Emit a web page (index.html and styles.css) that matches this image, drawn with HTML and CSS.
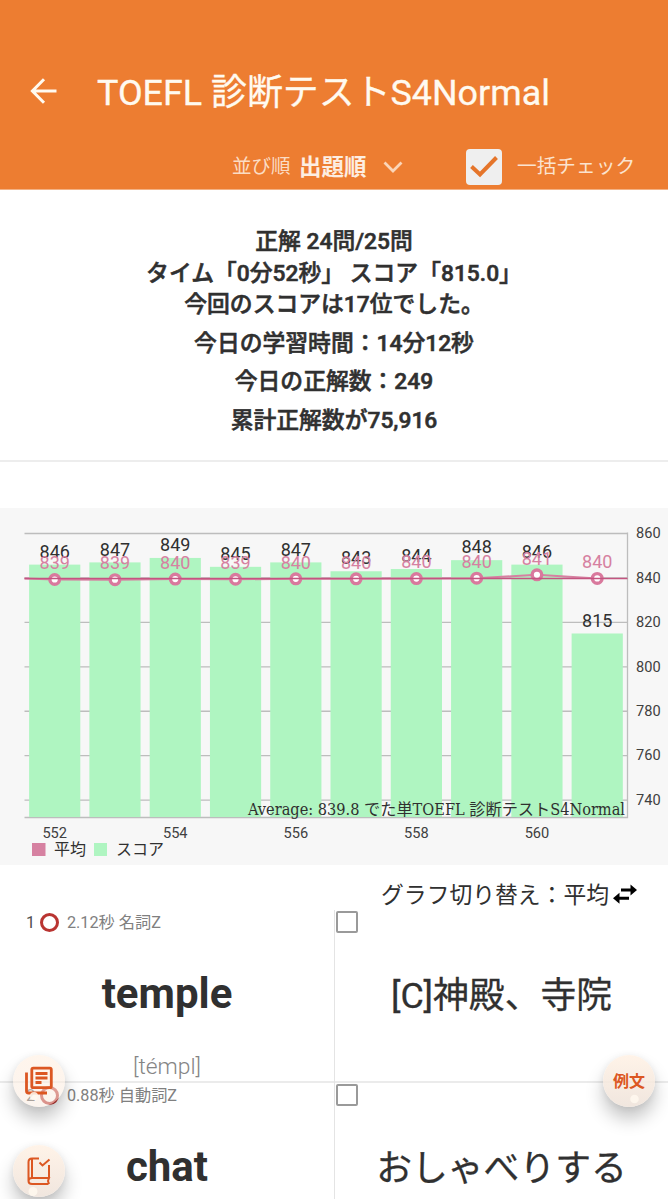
FILE: index.html
```html
<!DOCTYPE html>
<html lang="ja">
<head>
<meta charset="utf-8">
<title>TOEFL 診断テストS4Normal</title>
<link rel="stylesheet" href="styles.css">
</head>
<body>
<header class="header">
  <div class="title-row">
    <svg class="back" viewBox="0 0 28 28"><path d="M26.500 14H3M14 2.200L2.400 14 14 25.800"/></svg>
    <h1 class="title">TOEFL 診断テストS4Normal</h1>
  </div>
  <div class="options">
    <span class="sort-label">並び順</span>
    <span class="sort-value">出題順</span>
    <svg class="chevron" viewBox="0 0 20 14"><path d="M1.500 2.500L10 11l8.500-8.500"/></svg>
    <span class="check-all"><svg viewBox="0 0 36 36"><path d="M5.500 17.500l8.500 8L30.500 8.500"/></svg></span>
    <span class="check-label">一括チェック</span>
  </div>
</header>
<main>
  <section class="summary">
    <p>正解 24問/25問</p>
    <p>タイム「0分52秒」 スコア「815.0」</p>
    <p>今回のスコアは17位でした。</p>
    <p class="spaced">今日の学習時間：14分12秒</p>
    <p class="spaced">今日の正解数：249</p>
    <p class="spaced">累計正解数が75,916</p>
  </section>
  <section class="chart">
    <svg id="chart" width="668" height="357" viewBox="0 0 668 357"></svg>
  </section>
  <div class="toggle"><span>グラフ切り替え：平均</span>
    <svg class="swap" viewBox="0 0 26 22"><path d="M9 7h11M17 15.200H6" /><path class="head" d="M18.500 1.500L25 7l-6.500 5.500zM7.500 9.700L1 15.200l6.500 5.500z"/></svg>
  </div>
  <section class="words">
    <article class="row">
      <div class="cell term">
        <div class="meta"><span class="num">1</span><i class="ring"></i><span>2.12秒 名詞Z</span></div>
        <div class="word">temple</div>
        <div class="phonetic">[témpl]</div>
      </div>
      <div class="cell meaning"><i class="box"></i><div class="sense">[C]神殿、寺院</div></div>
    </article>
    <article class="row">
      <div class="cell term">
        <div class="meta"><span class="num">2</span><i class="ring"></i><span>0.88秒 自動詞Z</span></div>
        <div class="word">chat</div>
      </div>
      <div class="cell meaning"><i class="box"></i><div class="sense">おしゃべりする</div></div>
    </article>
  </section>
</main>
<div class="fab fab-cards">
  <svg viewBox="0 0 52 52"><g class="stroke"><rect x="18.800" y="13.200" width="19.500" height="19.500" rx="1.500"/><path d="M13.500 17.500v18.500q0 2 2 2H34M22.500 18.500h12M22.500 23h12M22.500 27.500h6"/></g><circle class="dot" cx="21" cy="41" r="4"/></svg>
</div>
<div class="fab fab-book">
  <svg viewBox="0 0 52 52"><g class="stroke thin"><path d="M26 13.500h-7q-3.500 0-3.500 3.500v19q0 3 3.500 3h16.500M19 13.500V33M36 20v13M15.500 36q0-3 3.500-3h17l-1 3 1 3M26.500 17.500l3 3 7-6"/></g><circle class="dot" cx="20" cy="46.500" r="4.500"/></svg>
</div>
<div class="fab fab-example"><span>例文</span><svg viewBox="0 0 52 52"><circle class="dot" cx="31.500" cy="44" r="4.300"/></svg></div>
<script src="chart.js"></script>
</body>
</html>
```
FILE: styles.css
```css
* { box-sizing: border-box; }
body {
  margin: 0;
  position: relative;
  height: 1199px;
  overflow: hidden;
  background: #fff;
  color: #303030;
  font-family: Roboto, "Noto Sans CJK JP", sans-serif;
}
p, h1 { margin: 0; }
svg { display: block; }
.header {
  height: 190px;
  padding-top: 67px;
  background: #ed7d31;
  color: #fffaf0;
  border-bottom: 1px solid #f3b184;
}
.title-row { display: flex; align-items: center; height: 52px; padding-left: 30px; }
.back { width: 28px; height: 28px; margin: -4px 39px 0 0; fill: none; stroke: #fffaf0; stroke-width: 3; }
.title { font-size: 35.900px; font-weight: 400; line-height: 52px; white-space: nowrap; -webkit-text-stroke: .3px; }
.options { display: flex; align-items: center; height: 36px; margin-top: 30px; padding-left: 232px; line-height: 36px; white-space: nowrap; }
.sort-label { width: 67px; font-size: 19.500px; color: #fbdcc4; }
.sort-value { width: 84px; font-size: 22.500px; font-weight: 700; color: #fdeee2; }
.chevron { width: 20px; height: 14px; fill: none; stroke: #fbd5b8; stroke-width: 2.800; }
.check-all { width: 36px; height: 36px; margin: 0 15px 0 63px; border-radius: 4px; background: #efefef; }
.check-all svg { fill: none; stroke: #e5752b; stroke-width: 4; }
.check-label { font-size: 19.700px; color: #fbe3cf; }
.summary {
  height: 272px;
  padding-top: 36px;
  border-bottom: 2px solid #ededed;
  font-size: 22.800px;
  font-weight: 500;
  line-height: 31.700px;
  text-align: center;
  -webkit-text-stroke: .55px;
}
.summary p.spaced { margin-top: 6.700px; }
.chart { height: 357px; margin-top: 46px; background: #f7f7f7; }
.grid { stroke: #bdbdbd; stroke-width: 1.300; }
.bar { fill: #aff5c1; }
.value { fill: #303030; font-size: 18px; text-anchor: middle; }
.avg-value { fill: #d681a1; font-size: 18px; text-anchor: middle; }
.axis { fill: #404040; font-size: 14.600px; }
.mid { text-anchor: middle; }
.avg-line { fill: none; stroke: #d681a1; stroke-width: 2; }
.limit { stroke: #c45480; stroke-width: 1.700; }
.point { fill: #fff; stroke: #d9799d; stroke-width: 3.400; }
.legend { fill: #303030; font-size: 16px; }
.caption { fill: #303030; font-family: "DejaVu Serif Condensed", "DejaVu Serif", "Noto Sans CJK JP", serif; font-stretch: condensed; font-size: 16px; }
.toggle { display: flex; height: 45px; padding: 14px 30px 0 0; justify-content: flex-end; font-size: 22.800px; line-height: 33px; }
.swap { width: 26px; height: 22px; margin: 4px 0 0 3px; fill: none; stroke: #000; stroke-width: 3; }
.swap .head { fill: #000; stroke: none; }
.row { display: grid; grid-template-columns: 334px 334px; height: 172.500px; border-bottom: 2px solid #ebebeb; }
.row:first-child { height: 173px; }
.cell { position: relative; text-align: center; }
.meaning { border-left: 1px solid #e4e4e4; }
.meta { display: flex; align-items: center; height: 25px; padding-left: 26px; color: #808080; font-size: 16.200px; line-height: 25px; white-space: nowrap; }
.num { width: 14px; text-align: left; color: #505050; }
.ring { width: 19px; height: 19px; margin-right: 8px; border: 3px solid #b93431; border-radius: 50%; }
.word { height: 66px; margin-top: 26px; font-size: 42px; font-weight: 700; line-height: 66px; }
.phonetic { margin-top: 23px; font-size: 22.800px; font-weight: 300; line-height: 34px; color: #858585; }
.box { display: block; width: 22px; height: 22px; margin: 1px 0 0 1px; border: 2px solid #9a9a9a; border-radius: 2px; }
.sense { margin-top: 37px; font-size: 35.800px; line-height: 52px; white-space: nowrap; -webkit-text-stroke: .3px; }
.fab {
  position: absolute;
  width: 52px;
  height: 52px;
  border-radius: 50%;
  background: linear-gradient(rgba(255, 241, 228, .86), rgba(238, 226, 217, .86));
  box-shadow: 0 12px 18px rgba(0, 0, 0, .23), 0 1px 7px rgba(0, 0, 0, .07);
  color: #dc5722;
}
.fab-cards { left: 13px; top: 1055px; background: linear-gradient(rgba(255, 241, 228, .7), rgba(248, 233, 222, .5)); }
.fab-book { left: 13px; top: 1145px; }
.fab-example { left: 603px; top: 1055px; display: flex; align-items: center; justify-content: center; padding-bottom: 3px; font-size: 16px; font-weight: 700; }
.fab-example svg { position: absolute; inset: 0; }
.stroke { fill: none; stroke: #dc5722; stroke-width: 2.800; }
.stroke.thin { stroke-width: 2; }
.dot { fill: #fff8ee; fill-opacity: .85; }
```
FILE: chart.js
```javascript
const svg = document.getElementById('chart');
const add = (name, attrs, text) => {
  const el = document.createElementNS('http://www.w3.org/2000/svg', name);
  for (const key in attrs) el.setAttribute(key, attrs[key]);
  if (text) el.textContent = text;
  svg.appendChild(el);
};
const scores = [846, 847, 849, 845, 847, 843, 844, 848, 846, 815];
const labels = [839, 839, 840, 839, 840, 840, 840, 840, 841, 840];
const averages = [839.3, 839.2, 839.5, 839.4, 839.6, 839.6, 839.7, 839.9, 841.4, 839.8];
const y = v => 25.5 + (860 - v) * 2.222;
const x = i => 54.7 + i * 60.28;
const bottom = 309.5;

for (let v = 860; v >= 740; v -= 20) {
  add('line', { class: 'grid', x1: 24.5, x2: 627.5, y1: y(v), y2: y(v) });
  add('text', { class: 'axis', x: 636, y: y(v) + 4.7 }, String(v));
}
add('path', { class: 'grid', fill: 'none', d: `M24.5 ${bottom}H627.5V24.5` });
scores.forEach((v, i) => {
  add('rect', { class: 'bar', x: x(i) - 25.6, y: y(v), width: 51.2, height: bottom - y(v) - 0.5 });
});
scores.forEach((v, i) => {
  add('text', { class: 'value', x: x(i), y: y(v) - 6.8 }, String(v));
});
add('polyline', { class: 'avg-line', points: `24.5,70.5 ${averages.map((v, i) => `${x(i)},${y(v)}`).join(' ')}` });
labels.forEach((v, i) => {
  add('text', { class: 'avg-value', x: x(i), y: y(averages[i]) - 10.3 }, String(v));
});
averages.forEach((v, i) => add('circle', { class: 'point', cx: x(i), cy: y(v), r: 4.8 }));
add('line', { class: 'limit', x1: 24.5, x2: 627.5, y1: 70.5, y2: 70.5 });
for (let i = 0; i < 10; i += 2) {
  add('text', { class: 'axis mid', x: x(i), y: 329.5 }, String(552 + i));
}
add('text', { class: 'caption', x: 248, y: 306.5, textLength: 377, lengthAdjust: 'spacingAndGlyphs' }, 'Average: 839.8 でた単TOEFL 診断テストS4Normal');
add('rect', { x: 32, y: 335, width: 13.5, height: 13, fill: '#d681a1' });
add('text', { class: 'legend', x: 54, y: 347 }, '平均');
add('rect', { class: 'bar', x: 94, y: 335, width: 13, height: 13 });
add('text', { class: 'legend', x: 116, y: 347 }, 'スコア');
```
